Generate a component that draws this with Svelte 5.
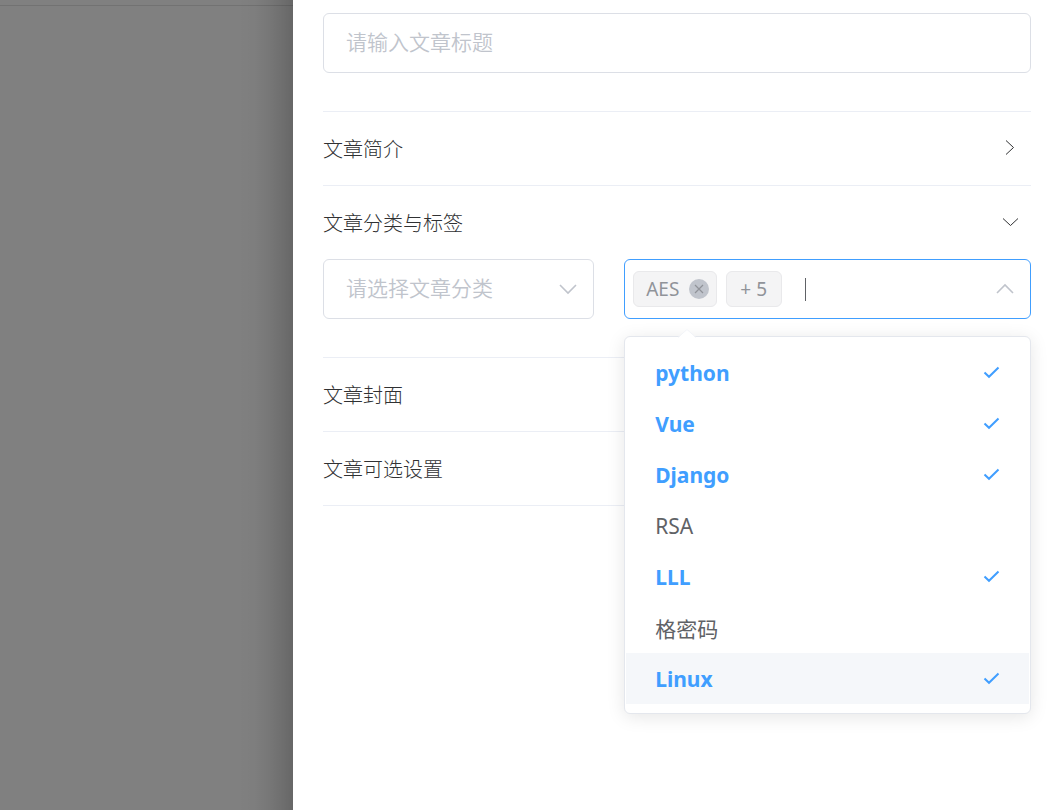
<script>
  let title = $state('');
  let category = $state('');
  let query = $state('');
  let options = $state([
    { name: 'python', selected: true },
    { name: 'Vue', selected: true },
    { name: 'Django', selected: true },
    { name: 'RSA', selected: false },
    { name: 'LLL', selected: true },
    { name: '格密码', selected: false },
    { name: 'Linux', selected: true }
  ]);
  let hovered = $state('Linux');
  let extra = $derived(options.filter((o) => o.selected).length);
</script>

{#snippet header(label, open)}
  <button class="head" type="button" aria-expanded={open}>
    <span>{label}</span>
    <svg class="fold" viewBox="0 0 20 20" aria-hidden="true">
      {#if open}
        <path d="M3 5.500 10.500 12.500 18 5.500" />
      {:else}
        <path d="M6 1.500 13.500 8.500 6 15.500" />
      {/if}
    </svg>
  </button>
{/snippet}

<div class="page">
  <div class="backdrop"><div class="topbar"></div></div>
  <main class="drawer">
    <input class="box title" type="text" placeholder="请输入文章标题" aria-label="文章标题" bind:value={title} />

    <div class="collapse">
      <section>{@render header('文章简介', false)}</section>
      <section>
        {@render header('文章分类与标签', true)}
        <div class="fields">
          <div class="field">
            <select class="box category" aria-label="文章分类" bind:value={category}>
              <option value="">请选择文章分类</option>
            </select>
            <svg class="chevron" viewBox="0 0 20 20" aria-hidden="true"><path d="M2 6l8 8 8-8" /></svg>
          </div>

          <div class="field">
            <div class="box tags">
              <span class="tag">
                AES
                <button class="remove" type="button" aria-label="AES">
                  <svg viewBox="0 0 20 20" aria-hidden="true"><path d="M6 6l8 8M14 6l-8 8" /></svg>
                </button>
              </span>
              <span class="tag count">+ {extra}</span>
              <span class="caret"></span>
              <input class="query" type="text" role="combobox" aria-label="标签" aria-expanded="true" aria-controls="tag-list" bind:value={query} />
            </div>
            <svg class="chevron" viewBox="0 0 20 20" aria-hidden="true"><path d="M2 14l8-8 8 8" /></svg>

            <div class="popup">
              <svg class="arrow" viewBox="0 0 18 9" aria-hidden="true">
                <path class="fill" d="M0 9 9 0l9 9z" />
                <path class="edge" d="M0 8.500 9 .5l9 8" />
              </svg>
              <ul id="tag-list" role="listbox" aria-multiselectable="true">
                {#each options as option}
                  <!-- svelte-ignore a11y_click_events_have_key_events -->
                  <li
                    role="option"
                    aria-selected={option.selected}
                    class:selected={option.selected}
                    class:hover={hovered === option.name}
                    onmouseenter={() => (hovered = option.name)}
                    onclick={() => (option.selected = !option.selected)}
                  >
                    <span>{option.name}</span>
                    {#if option.selected}
                      <svg class="check" viewBox="0 0 18 18" aria-hidden="true"><path d="M2.500 8.500l4.500 4.300 9.500-9.300" /></svg>
                    {/if}
                  </li>
                {/each}
              </ul>
            </div>
          </div>
        </div>
      </section>
      <section>{@render header('文章封面', false)}</section>
      <section>{@render header('文章可选设置', false)}</section>
    </div>
  </main>
</div>

<style>
  :global(body) {
    margin: 0;
  }

  .page,
  .page * {
    box-sizing: border-box;
  }

  .page {
    display: grid;
    grid-template-columns: 293px 1fr;
    min-height: 100vh;
    background: #808080;
    color: #303133;
    font-family: 'Noto Sans', 'Noto Sans CJK SC', sans-serif;
    font-size: 21px;
  }

  button,
  input,
  select {
    font: inherit;
    color: inherit;
  }

  .backdrop {
    background: linear-gradient(
      to left,
      rgba(0, 0, 0, 0.2),
      rgba(0, 0, 0, 0.14) 10px,
      rgba(0, 0, 0, 0.07) 24px,
      rgba(0, 0, 0, 0.02) 38px,
      transparent 56px
    );
  }

  .topbar {
    height: 6px;
    border-bottom: 1px solid rgba(0, 0, 0, 0.11);
  }

  .drawer {
    padding: 13px 29px 30px 30px;
    background: #fff;
  }

  .box {
    display: block;
    width: 100%;
    height: 60px;
    padding: 0 22px 2px;
    border: 1px solid #dcdfe6;
    border-radius: 6px;
    outline: none;
    background: #fff;
  }

  .title {
    font-weight: 350;
  }

  .title::placeholder {
    color: #c0c4cc;
    opacity: 1;
  }

  .collapse {
    margin-top: 38px;
    border-top: 1px solid #ebeef5;
  }

  section {
    border-bottom: 1px solid #ebeef5;
  }

  .head {
    display: flex;
    align-items: center;
    justify-content: space-between;
    width: 100%;
    height: 73px;
    padding: 0 11px 0 0;
    border: 0;
    background: none;
    font-size: 20px;
    font-weight: 300;
    cursor: pointer;
  }

  .fold {
    width: 20px;
    height: 20px;
    fill: none;
    stroke: #303133;
    stroke-width: 1;
  }

  .fields {
    display: grid;
    grid-template-columns: 2fr 3fr;
    gap: 30px;
    padding-bottom: 38px;
  }

  .field {
    position: relative;
    min-width: 0;
  }

  .category {
    appearance: none;
    color: #c0c4cc;
    font-weight: 350;
  }

  .chevron {
    position: absolute;
    top: 20px;
    right: 16px;
    width: 20px;
    height: 20px;
    fill: none;
    stroke: #c0c4cc;
    stroke-width: 1.6;
    pointer-events: none;
  }

  .tags {
    display: flex;
    align-items: center;
    padding: 0 46px 0 8px;
    border-color: #409eff;
  }

  .tag {
    display: flex;
    align-items: center;
    gap: 10px;
    height: 36px;
    margin-right: 9px;
    padding: 0 7px 0 12px;
    border: 1px solid #e9e9eb;
    border-radius: 6px;
    background: #f4f4f5;
    color: #909399;
    font-size: 19px;
    white-space: nowrap;
  }

  .count {
    padding: 0 14px 0 13px;
  }

  .remove {
    width: 20px;
    height: 20px;
    padding: 0;
    border: 0;
    border-radius: 50%;
    background: #c0c4cc;
    cursor: pointer;
  }

  .remove svg {
    display: block;
    width: 20px;
    height: 20px;
    fill: none;
    stroke: #909399;
    stroke-width: 1.2;
  }

  .caret {
    width: 1px;
    height: 23px;
    margin-left: 14px;
    background: #606266;
  }

  .query {
    flex: 1;
    min-width: 0;
    height: 42px;
    padding: 0;
    border: 0;
    outline: none;
    background: none;
    caret-color: transparent;
  }

  .popup {
    position: absolute;
    top: calc(100% + 17px);
    left: 0;
    right: 0;
    z-index: 1;
    padding: 10px 0 9px;
    border: 1px solid #e4e7ed;
    border-radius: 6px;
    background: #fff;
    box-shadow: 0 3px 18px rgba(0, 0, 0, 0.1);
  }

  .arrow {
    position: absolute;
    top: -8px;
    left: 53px;
    width: 18px;
    height: 9px;
  }

  .fill {
    fill: #fff;
  }

  .edge {
    fill: none;
    stroke: #f2f4f8;
  }

  ul {
    margin: 0 1px;
    padding: 0;
    list-style: none;
  }

  li {
    display: flex;
    align-items: center;
    justify-content: space-between;
    height: 51px;
    padding: 0 29px;
    color: #606266;
    font-weight: 400;
    cursor: pointer;
  }

  li.hover {
    background: #f5f7fa;
  }

  li.selected {
    color: #409eff;
    font-weight: 700;
  }

  .check {
    width: 18px;
    height: 18px;
    fill: none;
    stroke: #409eff;
    stroke-width: 2;
  }
</style>
